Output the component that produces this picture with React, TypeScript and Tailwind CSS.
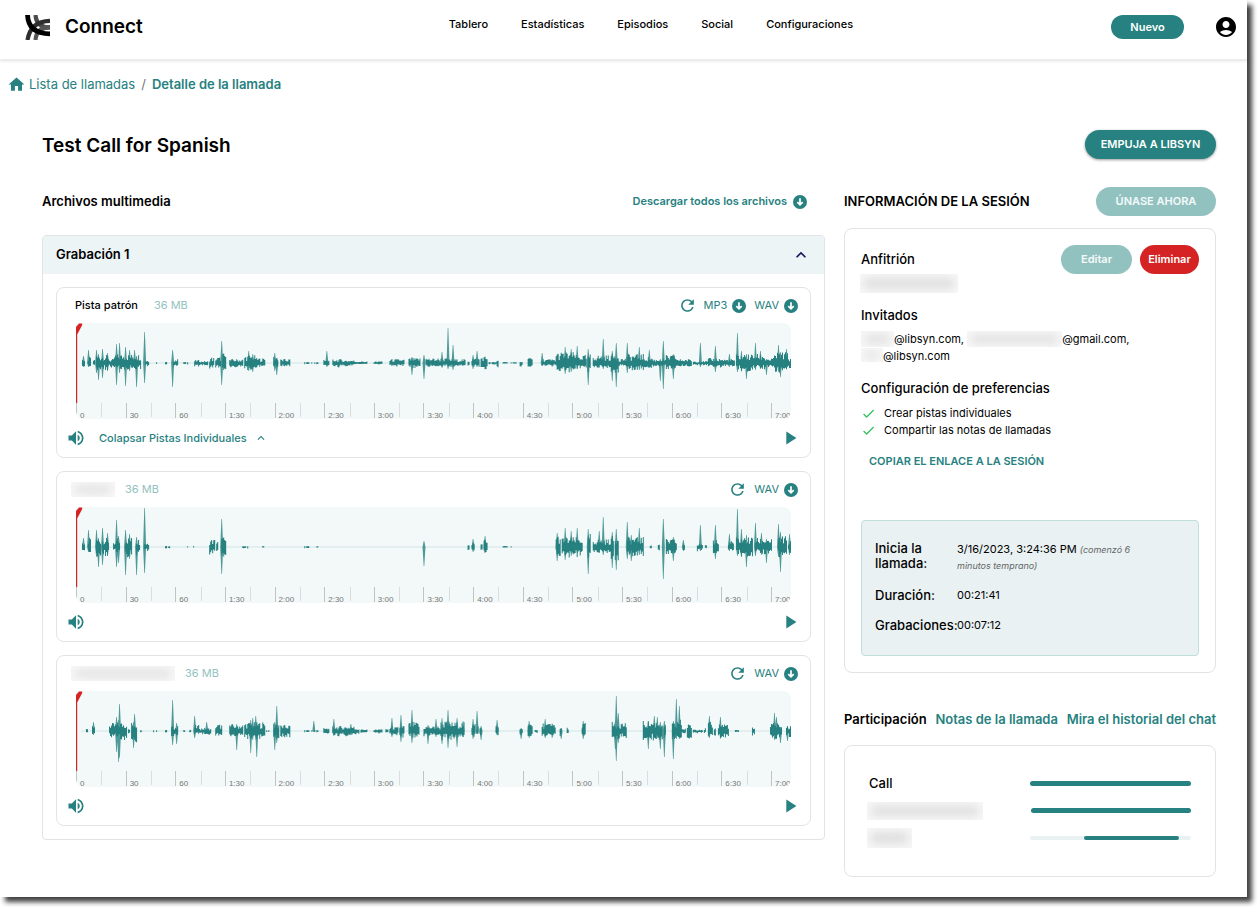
import { useState } from "react";
import {
  MdAccountCircle,
  MdCheck,
  MdHome,
  MdKeyboardArrowDown,
  MdKeyboardArrowUp,
  MdPlayArrow,
  MdRefresh,
  MdVolumeUp
} from "react-icons/md";

/** [from, to, up, down] in wave units: a run of continuous speech. */
type Burst = [number, number, number, number];
/** [x, up, down]: one sharp peak. */
type Spike = [number, number, number];

interface Track {
  id: string;
  name?: string;
  /** Tailwind width of the hidden name, for tracks without a public one. */
  hiddenName?: string;
  size: string;
  formats: string[];
  collapsible?: boolean;
  bursts: Burst[];
  spikes: Spike[];
}

const WAVE_WIDTH = 714;
const WAVE_MID = 40;
const DURATION = 432;

const TRACKS: Track[] = [
  {
    id: "master",
    name: "Pista patrón",
    size: "36 MB",
    formats: ["MP3", "WAV"],
    collapsible: true,
    bursts: [
      [6, 8, 4, 3], [12, 14, 6, 3], [17, 18, 4, 3], [20, 24, 8, 7], [25, 32, 8, 7], [33, 38, 4, 4],
      [38, 50, 9, 7], [51, 64, 9, 6], [69, 72, 3, 3], [78, 90, 1, 1], [97, 101, 4, 3], [106, 114, 1, 1],
      [118, 123, 3, 5], [124, 131, 2, 2], [133, 137, 6, 5], [139, 144, 6, 5], [146, 149, 10, 8],
      [153, 166, 4, 4], [168, 179, 8, 7], [179, 188, 5, 4], [197, 201, 7, 4], [204, 213, 4, 3],
      [224, 243, 1, 1], [247, 252, 3, 3], [256, 266, 4, 4], [266, 277, 3, 3], [277, 290, 2, 1],
      [297, 305, 2, 1], [313, 327, 4, 3], [332, 343, 5, 5], [349, 371, 5, 4], [372, 388, 4, 4],
      [391, 392, 3, 3], [395, 402, 5, 4], [404, 410, 7, 6], [412, 419, 1, 1], [420, 421, 4, 4],
      [426, 440, 1, 0], [443, 445, 1, 4], [451, 455, 6, 4], [458, 460, 1, 1], [465, 479, 4, 3],
      [479, 483, 11, 8], [484, 498, 11, 9], [498, 509, 8, 6], [511, 513, 9, 10], [516, 534, 8, 5],
      [534, 541, 9, 10], [541, 549, 5, 3], [550, 566, 9, 7], [566, 575, 6, 5], [576, 588, 4, 3],
      [589, 599, 8, 6], [599, 614, 4, 3], [616, 631, 2, 2], [631, 644, 5, 4], [644, 657, 4, 3],
      [659, 674, 9, 8], [675, 687, 9, 6], [687, 696, 5, 4], [697, 711, 11, 9], [712, 713, 4, 5]
    ],
    spikes: [
      [7, 7, 4], [12, 13, 4], [20, 13, 10], [22, 9, 17], [26, 14, 15], [31, 10, 8], [40, 19, 22],
      [43, 20, 10], [49, 16, 23], [53, 13, 8], [58, 13, 5], [60, 7, 24], [68, 31, 20], [96, 13, 24],
      [145, 22, 22], [172, 12, 8], [176, 9, 9], [198, 10, 8], [200, 5, 12], [250, 12, 4], [335, 6, 12],
      [347, 8, 16], [365, 11, 4], [371, 35, 6], [376, 18, 7], [396, 8, 6], [400, 12, 4], [465, 10, 3],
      [488, 16, 11], [494, 14, 9], [500, 17, 5], [511, 14, 22], [526, 24, 6], [535, 12, 18],
      [539, 20, 24], [550, 20, 10], [562, 16, 7], [572, 13, 5], [586, 22, 26], [583, 4, 18],
      [596, 9, 16], [623, 20, 4], [638, 17, 9], [652, 9, 4], [660, 30, 9], [664, 12, 8], [669, 9, 16],
      [678, 20, 7], [683, 12, 6], [689, 4, 12], [701, 18, 9], [703, 11, 14], [709, 14, 5]
    ]
  },
  {
    id: "guest-1",
    hiddenName: "w-11",
    size: "36 MB",
    formats: ["WAV"],
    bursts: [
      [6, 8, 5, 3], [12, 14, 9, 5], [20, 24, 9, 10], [26, 32, 9, 9], [37, 39, 4, 3], [40, 43, 9, 9],
      [49, 55, 10, 10], [60, 63, 8, 8], [68, 72, 5, 4], [88, 93, 1, 1], [111, 118, 1, 0],
      [133, 138, 8, 7], [140, 141, 6, 8], [145, 149, 10, 11], [166, 171, 1, 1], [184, 188, 1, 0],
      [228, 233, 1, 1], [239, 242, 1, 0], [391, 392, 4, 4], [395, 397, 5, 4], [404, 405, 4, 4],
      [407, 410, 8, 5], [426, 434, 1, 0], [479, 483, 12, 9], [485, 505, 10, 10], [511, 513, 14, 12],
      [516, 534, 8, 6], [534, 536, 11, 14], [538, 541, 12, 14], [550, 566, 10, 9], [573, 574, 2, 1],
      [581, 582, 4, 3], [589, 599, 8, 7], [606, 607, 4, 3], [620, 625, 5, 4], [628, 629, 2, 1],
      [636, 641, 8, 7], [651, 656, 6, 3], [659, 675, 10, 9], [678, 694, 9, 7], [701, 709, 11, 10],
      [711, 713, 6, 6]
    ],
    spikes: [
      [7, 9, 3], [12, 17, 5], [20, 17, 10], [22, 9, 20], [26, 19, 18], [31, 14, 8], [40, 27, 20],
      [42, 11, 16], [49, 17, 28], [53, 13, 12], [60, 10, 28], [68, 39, 26], [145, 28, 27],
      [347, 6, 19], [396, 8, 5], [408, 11, 6], [480, 14, 14], [488, 19, 13], [494, 16, 9],
      [500, 19, 6], [511, 18, 27], [522, 16, 6], [526, 30, 8], [535, 15, 21], [539, 18, 23],
      [550, 25, 12], [554, 12, 14], [562, 19, 8], [586, 28, 32], [596, 10, 14], [606, 7, 4],
      [623, 22, 4], [638, 22, 12], [652, 13, 4], [660, 38, 9], [664, 18, 10], [669, 12, 20],
      [678, 24, 9], [684, 14, 8], [689, 8, 16], [701, 23, 10], [703, 15, 25], [712, 13, 8]
    ]
  },
  {
    id: "guest-2",
    hiddenName: "w-[104px]",
    size: "36 MB",
    formats: ["WAV"],
    bursts: [
      [10, 11, 2, 1], [16, 18, 5, 4], [33, 40, 8, 6], [40, 50, 9, 10], [52, 53, 2, 2], [55, 60, 9, 11],
      [64, 65, 2, 1], [76, 90, 1, 1], [95, 101, 5, 5], [106, 108, 1, 1], [113, 114, 2, 1],
      [118, 123, 6, 4], [124, 134, 3, 3], [139, 145, 7, 5], [153, 166, 7, 5], [168, 188, 9, 8],
      [190, 192, 1, 1], [197, 202, 9, 8], [204, 213, 6, 6], [224, 243, 1, 1], [247, 252, 3, 3],
      [256, 277, 5, 5], [278, 282, 3, 4], [284, 290, 2, 2], [297, 305, 2, 2], [309, 311, 2, 1],
      [313, 321, 4, 4], [323, 327, 6, 7], [332, 342, 9, 7], [347, 364, 5, 5], [364, 374, 10, 9],
      [375, 387, 9, 9], [395, 398, 8, 7], [400, 401, 6, 5], [403, 404, 4, 6], [419, 421, 7, 4],
      [443, 445, 2, 4], [451, 455, 8, 6], [458, 460, 2, 2], [465, 478, 8, 6], [483, 484, 3, 5],
      [490, 491, 4, 3], [505, 508, 8, 7], [535, 549, 9, 8], [566, 585, 10, 9], [587, 588, 8, 10],
      [595, 599, 8, 9], [600, 604, 12, 7], [605, 608, 3, 2], [610, 614, 7, 7], [616, 625, 2, 2],
      [627, 628, 3, 2], [631, 635, 9, 7], [637, 638, 5, 5], [641, 651, 8, 7], [658, 661, 1, 1],
      [675, 677, 4, 4], [693, 701, 8, 8], [702, 704, 5, 6], [709, 713, 5, 6]
    ],
    spikes: [
      [17, 9, 4], [40, 14, 21], [43, 27, 27], [42, 11, 31], [58, 17, 9], [57, 9, 17], [96, 31, 14],
      [100, 8, 13], [118, 15, 7], [130, 9, 2], [160, 4, 19], [174, 11, 22], [176, 13, 9],
      [179, 15, 9], [180, 8, 26], [198, 9, 19], [200, 25, 12], [237, 10, 1], [257, 12, 5],
      [274, 7, 4], [315, 13, 6], [324, 16, 11], [335, 21, 12], [351, 6, 13], [359, 12, 6],
      [365, 13, 13], [371, 21, 17], [380, 13, 16], [386, 10, 6], [396, 12, 8], [400, 20, 3],
      [404, 5, 9], [420, 11, 4], [444, 3, 8], [452, 10, 7], [468, 12, 7], [484, 3, 8],
      [506, 10, 8], [539, 35, 30], [541, 18, 12], [538, 10, 18], [571, 10, 18], [577, 15, 7],
      [580, 14, 7], [583, 9, 18], [587, 10, 26], [596, 10, 28], [599, 32, 8], [602, 25, 8],
      [632, 15, 7], [643, 14, 6], [697, 18, 9], [699, 14, 8], [703, 4, 12], [710, 5, 10]
    ]
  }
];

const NAV = ["Tablero", "Estadísticas", "Episodios", "Social", "Configuraciones"];
const PREFERENCES = ["Crear pistas individuales", "Compartir las notas de llamadas"];
const TABS = ["Participación", "Notas de la llamada", "Mira el historial del chat"];

const RULER_LABELS = [
  "0", "30", "60", "1:30", "2:00", "2:30", "3:00", "3:30", "4:00", "4:30", "5:00", "5:30", "6:00", "6:30", "7:00"
];

// Stable pseudo-random value in 0..1, so the wave never changes between renders
function noise(n: number) {
  const v = Math.sin(n * 12.9898) * 43758.5453;
  return v - Math.floor(v);
}

function burstPath(bursts: Burst[]) {
  let d = "";
  for (const [from, to, up, down] of bursts) {
    for (let x = from; x <= to; x++) {
      // near-silent runs are broken up into dots
      if (up <= 1 && down <= 1 && noise(x) < 0.5) continue;
      const u = up * (0.25 + 0.75 * noise(x));
      const l = down * (0.25 + 0.75 * noise(x + 500));
      d += `M${x} ${(WAVE_MID - u).toFixed(1)}h1v${(u + l + 0.4).toFixed(1)}h-1z`;
    }
  }
  return d;
}

function spikePath(spikes: Spike[]) {
  return spikes
    .map(([x, up, down]) => `M${x - 1} ${WAVE_MID}L${x + 0.2} ${WAVE_MID - up}h.6L${x + 2} ${WAVE_MID}L${x + 0.8} ${WAVE_MID + down}h-.6z`)
    .join("");
}

function Logo() {
  return (
    <svg viewBox="0 0 25 25" className="size-[25px]" fill="none" aria-hidden="true">
      <path d="M10.500 0C11 7 15 12.400 25 12.400" stroke="#4a4a4a" strokeWidth="4.200" />
      <path d="M10.500 25C11 17 15 12.400 25 12.400" stroke="#555" strokeWidth="4.200" />
      <path d="M2.500 25C4.500 13 11 6 25 5.800" stroke="#2e2e2e" strokeWidth="4.200" />
      <path d="M2.500 0C3 11 9 18.800 25 18.800" stroke="#000" strokeWidth="4.800" />
    </svg>
  );
}

function DownloadIcon() {
  return (
    <svg viewBox="0 0 14 14" className="size-[14px] shrink-0" aria-hidden="true">
      <circle cx="7" cy="7" r="7" fill="#268180" />
      <path d="M7 3.200v6.200M4.300 7.200L7 9.900l2.700-2.700" fill="none" stroke="#fff" strokeWidth="1.700" />
    </svg>
  );
}

function Redacted({ className }: { className: string }) {
  return (
    <span aria-hidden="true" className={"inline-block overflow-hidden bg-[#f8f8f8] p-1 " + className}>
      <span className="block h-full w-full bg-[#dedede] blur-[5px]" />
    </span>
  );
}

function Waveform({ track }: { track: Track }) {
  return (
    <div className="mx-[19px] h-24 overflow-hidden rounded-lg rounded-tl-none bg-[#f3f9f9]">
      <svg
        viewBox={`0 0 ${WAVE_WIDTH} 80`}
        preserveAspectRatio="none"
        className="block h-20 w-full"
        role="img"
        aria-label="Forma de onda"
      >
        <path d={`M5 ${WAVE_MID}H${WAVE_WIDTH}`} stroke="#268180" strokeOpacity="0.15" />
        <path d={burstPath(track.bursts)} fill="#268180" />
        <path d={spikePath(track.spikes)} fill="#268180" fillOpacity="0.8" />
        <path d="M0 4L3 0.500H6.200V2L1.200 11.500V80H0z" fill="#d52323" />
      </svg>
      <div className="flex h-4 overflow-hidden">
        {RULER_LABELS.map((label, i) => (
          <div
            key={label}
            className="relative flex h-[15px] shrink-0 items-end border-l border-[#bfc3c3] pl-[3px] font-['Liberation_Sans',sans-serif] text-[8px] leading-[5px] text-[#777]"
            style={{ width: `${(30 / DURATION) * 100}%` }}
          >
            {label}
            {i < 14 && <span className="absolute top-0 left-1/2 h-[14px] w-px bg-[#d9dddd]" />}
          </div>
        ))}
      </div>
    </div>
  );
}

function TrackCard({ track }: { track: Track }) {
  return (
    <article className="rounded-lg border border-[#e3e3e3]">
      <div className="flex h-[35px] items-center justify-between pr-3">
        <div className="flex items-center text-[11px]">
          {track.name && <h3 className="ml-[18px] font-medium">{track.name}</h3>}
          {track.hiddenName && <Redacted className={"ml-[14px] h-[15px] " + track.hiddenName} />}
          <span className={"text-[#92c2c0] " + (track.name ? "ml-4" : "ml-[10px]")}>{track.size}</span>
        </div>
        <div className="flex items-center text-[11px] text-[#268180]">
          <button type="button" aria-label="Recargar" className="mr-[7px]">
            <MdRefresh className="size-[19px]" />
          </button>
          {track.formats.map((f) => (
            <a key={f} href="#" className="ml-2 flex items-center gap-[5px] first-of-type:ml-0">
              {f}
              <DownloadIcon />
            </a>
          ))}
        </div>
      </div>
      <Waveform track={track} />
      <div className="flex h-[38px] items-center pr-[9px] pl-[9px] text-[#268180]">
        <button type="button" aria-label="Volumen">
          <MdVolumeUp className="size-5" />
        </button>
        {track.collapsible && (
          <button type="button" className="ml-[13px] flex items-center gap-[7px] text-[11px] font-medium">
            Colapsar Pistas Individuales
            <MdKeyboardArrowUp className="size-[14px]" />
          </button>
        )}
        <button type="button" aria-label="Reproducir" className="ml-auto">
          <MdPlayArrow className="size-[22px]" />
        </button>
      </div>
    </article>
  );
}

function Header() {
  return (
    <header className="flex h-[60px] items-start border-b border-[#ececec] pr-[9px] pl-[25px] shadow-[0_1px_3px_rgba(0,0,0,0.12)]">
      <a href="#" className="mt-[14px] flex items-center gap-[15px] text-[19px] leading-[26px] font-semibold">
        <Logo />
        Connect
      </a>
      <nav className="mt-4 flex flex-1 justify-center gap-[33px] pl-12 text-[11px] leading-4 font-medium">
        {NAV.map((item) => (
          <a key={item} href="#">{item}</a>
        ))}
      </nav>
      <button type="button" className="mt-[15px] h-6 w-[73px] rounded-full bg-[#268180] text-[11px] font-semibold text-white">
        Nuevo
      </button>
      <button type="button" aria-label="Cuenta" className="mt-[15px] ml-[30px]">
        <MdAccountCircle className="size-6" />
      </button>
    </header>
  );
}

function MediaFiles() {
  const [open, setOpen] = useState(true);
  const Chevron = open ? MdKeyboardArrowUp : MdKeyboardArrowDown;

  return (
    <section className="min-w-0 flex-1">
      <div className="flex h-[29px] items-center justify-between pr-[18px]">
        <h2 className="text-[13px] font-semibold">Archivos multimedia</h2>
        <a href="#" className="flex items-center gap-[6px] text-[11px] font-semibold text-[#268180]">
          Descargar todos los archivos
          <DownloadIcon />
        </a>
      </div>
      <div className="mt-[19px] overflow-hidden rounded-sm border border-[#e3e3e3]">
        <button
          type="button"
          aria-expanded={open}
          onClick={() => setOpen(!open)}
          className="flex h-[38px] w-full items-center justify-between bg-[#ecf4f6] px-[13px] text-[13px] font-semibold"
        >
          Grabación 1
          <Chevron className="size-5 text-[#15155c]" />
        </button>
        {open && (
          <div className="flex flex-col gap-[13px] p-[13px]">
            {TRACKS.map((t) => <TrackCard key={t.id} track={t} />)}
          </div>
        )}
      </div>
    </section>
  );
}

function SessionInfo() {
  return (
    <section>
      <div className="flex h-[29px] items-center justify-between">
        <h2 className="text-[13px] font-semibold">INFORMACIÓN DE LA SESIÓN</h2>
        <button type="button" disabled className="h-[29px] w-[120px] rounded-full bg-[#92c2c0] text-[11px] font-semibold text-white/90">
          ÚNASE AHORA
        </button>
      </div>
      <div className="mt-3 rounded-lg border border-[#e3e3e3] p-4">
        <div className="flex items-center justify-between">
          <h3 className="text-[13px] font-medium">Anfitrión</h3>
          <div className="flex gap-2 text-[11px] font-semibold text-white">
            <button type="button" disabled className="h-[29px] w-[71px] rounded-full bg-[#92c2c0] text-white/90">Editar</button>
            <button type="button" className="h-[29px] w-[59px] rounded-full bg-[#d52323]">Eliminar</button>
          </div>
        </div>
        <Redacted className="-ml-px h-[19px] w-[98px] align-top" />

        <h3 className="mt-[7px] text-[13px] leading-5 font-medium">Invitados</h3>
        <p className="mt-[6px] text-[11px] leading-[17px]">
          <Redacted className="h-4 w-[33px] align-top" />@libsyn.com,{" "}
          <Redacted className="h-4 w-[95px] align-top" />@gmail.com,
          <br />
          <Redacted className="h-[14px] w-[22px] align-top" />@libsyn.com
        </p>

        <h3 className="mt-[13px] text-[13px] leading-5 font-medium">Configuración de preferencias</h3>
        <ul className="mt-[7px] text-[11px] leading-[17px]">
          {PREFERENCES.map((p) => (
            <li key={p} className="flex items-center gap-2">
              <MdCheck className="size-[15px] text-[#3cc065]" />
              {p}
            </li>
          ))}
        </ul>

        <button type="button" className="mt-[14px] ml-2 block text-[11px] leading-[17px] font-semibold text-[#268180]">
          COPIAR EL ENLACE A LA SESIÓN
        </button>

        <dl className="mt-[50px] grid grid-cols-[82px_1fr] gap-y-[15px] rounded-sm border border-[#bfdedc] bg-[#e9f1f2] pt-5 pr-10 pb-[22px] pl-[13px] text-[11px]">
          <dt className="text-[13px] leading-[15px] font-medium">Inicia la llamada:</dt>
          <dd className="leading-4">
            3/16/2023, 3:24:36 PM <em className="text-[9px] leading-none text-[#666]">(comenzó 6 minutos temprano)</em>
          </dd>
          <dt className="text-[13px] leading-[15px] font-medium">Duración:</dt>
          <dd className="leading-[15px]">00:21:41</dd>
          <dt className="text-[13px] leading-[15px] font-medium">Grabaciones:</dt>
          <dd className="leading-[15px]">00:07:12</dd>
        </dl>
      </div>
    </section>
  );
}

function Participation() {
  const [tab, setTab] = useState(0);

  return (
    <section className="mt-9">
      <div className="flex justify-between text-[13px] leading-5 font-semibold" role="tablist">
        {TABS.map((t, i) => (
          <button
            key={t}
            type="button"
            role="tab"
            aria-selected={tab === i}
            onClick={() => setTab(i)}
            className={tab === i ? "text-black" : "text-[#268180]"}
          >
            {t}
          </button>
        ))}
      </div>
      <div className="mt-4 rounded-lg border border-[#e3e3e3] p-6">
        <div className="flex h-[27px] items-center justify-between">
          <span className="text-[13px] font-medium">Call</span>
          <div className="h-[5px] w-[161px] rounded-full bg-[#268180]" />
        </div>
        <div className="flex h-[27px] items-center justify-between">
          <Redacted className="-ml-0.5 h-[18px] w-[116px]" />
          <div className="h-[5px] w-[160px] rounded-full bg-[#268180]" />
        </div>
        <div className="flex h-7 items-center justify-between">
          <Redacted className="-ml-0.5 h-5 w-[45px]" />
          <div className="h-1 w-[161px] rounded-full bg-[#e9f1f2]">
            <div className="h-1 rounded-full bg-[#268180]" style={{ marginLeft: "33.5%", width: "59%" }} />
          </div>
        </div>
      </div>
    </section>
  );
}

export default function App() {
  return (
    <div className="min-h-screen overflow-hidden bg-white pr-[10px] pb-[10px] font-[Inter,sans-serif] text-black">
      <div className="bg-white shadow-[5px_5px_5px_rgba(0,0,0,0.75)]">
        <Header />
        <nav className="flex items-center px-[7px] pt-[14px] text-[13px] leading-5 text-[#268180]" aria-label="Ruta">
          <MdHome className="size-[19px]" />
          <a href="#" className="ml-[3px]">Lista de llamadas</a>
          <span className="mx-[6px] text-[#777]">/</span>
          <span className="font-semibold">Detalle de la llamada</span>
        </nav>
        <main className="pt-9 pr-[31px] pb-5 pl-[42px]">
          <div className="flex h-[29px] items-center justify-between">
            <h1 className="pt-[3px] text-[19px] font-semibold">Test Call for Spanish</h1>
            <button type="button" className="h-[29px] w-[131px] rounded-full bg-[#268180] text-[11px] font-semibold text-white shadow-[0_1px_3px_rgba(0,0,0,0.4)]">
              EMPUJA A LIBSYN
            </button>
          </div>
          <div className="mt-7 flex items-start gap-[19px]">
            <MediaFiles />
            <div className="w-[372px] shrink-0">
              <SessionInfo />
              <Participation />
            </div>
          </div>
        </main>
      </div>
    </div>
  );
}
